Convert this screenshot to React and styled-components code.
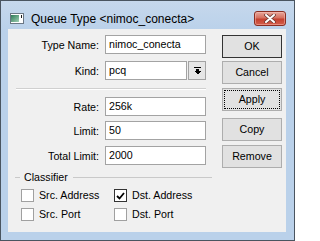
import React from 'react';
import styled, { createGlobalStyle } from 'styled-components';

const Global = createGlobalStyle`
  html, body { margin: 0; padding: 0; background: #ffffff; }
  body { font-family: "Liberation Sans", Arial, sans-serif; }
  * { box-sizing: border-box; }
`;

const Window = styled.div`
  width: 295px;
  height: 241px;
  border: 1px solid #4a5560;
  background: linear-gradient(#c6d8ec, #bad1ea 30px, #bad1ea);
  display: flex;
  flex-direction: column;
  padding: 0 8px 8px 7px;
`;

const TitleBar = styled.div`
  height: 28px;
  display: flex;
  align-items: flex-start;
  flex: none;
`;

const TitleIcon = styled.svg`
  margin-top: 12px;
  margin-left: 2px;
  flex: none;
`;

const TitleText = styled.div`
  margin-top: 11px;
  margin-left: 7px;
  font-size: 12px;
  line-height: 14px;
  color: #000;
  white-space: nowrap;
`;

const CloseButton = styled.div`
  margin-left: auto;
  margin-top: 10px;
  width: 32px;
  height: 15px;
  border: 1px solid #8a2e22;
  border-radius: 3px;
  background: linear-gradient(#e6a89c, #d6705f 45%, #c4412f 55%, #d45f4c);
  box-shadow: inset 0 0 0 1px rgba(255, 200, 190, 0.45);
  display: flex;
  align-items: center;
  justify-content: center;
`;

const Content = styled.div`
  height: 203px;
  background: #f0f0f0;
  display: flex;
  font-size: 10.67px;
  color: #000;
`;

const LeftPane = styled.div`
  width: 214px;
  display: flex;
  flex-direction: column;
`;

const RightPane = styled.div`
  width: 60px;
  display: flex;
  flex-direction: column;
`;

const FieldRow = styled.div`
  display: flex;
  align-items: center;
  height: 19px;
  margin-top: ${p => p.$mt}px;
`;

const Label = styled.div`
  width: 91px;
  text-align: right;
  white-space: nowrap;
  margin-right: 6px;
`;

const Input = styled.div`
  width: ${p => p.$w}px;
  height: 19px;
  background: #fff;
  border: 1px solid #a3a3a3;
  padding-left: 3px;
  line-height: 17px;
  white-space: nowrap;
`;

const DropButton = styled.div`
  width: 18px;
  height: 19px;
  margin-left: 1px;
  background: #e6e6e6;
  border: 1px solid #a3a3a3;
  display: flex;
  align-items: center;
  justify-content: center;
`;

const Separator = styled.div`
  margin-top: 8px;
  margin-left: 8px;
  width: 190px;
  height: 2px;
  border-top: 1px solid #d0d0d0;
  border-bottom: 1px solid #ffffff;
`;

const Legend = styled.div`
  margin-top: 6px;
  height: 13px;
  display: flex;
  align-items: center;
`;

const LegendLine = styled.div`
  height: 1px;
  background: #c9c9c9;
  margin-left: ${p => p.$ml}px;
  width: ${p => p.$w}px;
`;

const LegendText = styled.div`
  margin-left: 4px;
  margin-right: 5px;
  line-height: 13px;
`;

const CheckRow = styled.div`
  display: flex;
  height: 13px;
  padding-left: 13px;
  margin-top: ${p => p.$mt}px;
`;

const CheckItem = styled.div`
  width: 93px;
  display: flex;
  align-items: center;
`;

const Box = styled.div`
  width: 13px;
  height: 13px;
  flex: none;
  border: 1px solid ${p => (p.$checked ? '#333333' : '#a0a0a0')};
  background: #fff;
  display: flex;
  align-items: center;
  justify-content: center;
`;

const CheckLabel = styled.div`
  margin-left: ${p => p.$ml}px;
  line-height: 13px;
  white-space: nowrap;
`;

const Button = styled.div`
  position: relative;
  height: 23px;
  margin-top: ${p => p.$mt}px;
  background: #e1e1e1;
  border: 1px solid ${p => (p.$default ? '#333333' : '#adadad')};
  display: flex;
  align-items: center;
  justify-content: center;
  line-height: 13px;
  &::after {
    content: '';
    display: ${p => (p.$focus ? 'block' : 'none')};
    position: absolute;
    inset: 1px;
    border: 1px dotted #000;
  }
`;

const CheckMark = () => (
  <svg width="9" height="8" viewBox="0 0 9 8">
    <path d="M1 4 L3.5 6.5 L8 1" fill="none" stroke="#000" strokeWidth="1.8" />
  </svg>
);

const Check = ({ label, checked, ml = 4 }) => (
  <CheckItem>
    <Box $checked={checked}>{checked && <CheckMark />}</Box>
    <CheckLabel $ml={ml}>{label}</CheckLabel>
  </CheckItem>
);

export default function App() {
  return (
    <>
      <Global />
      <Window>
        <TitleBar>
          <TitleIcon width="14" height="11" viewBox="0 0 14 11" shapeRendering="crispEdges">
            <defs>
              <linearGradient id="ig" x1="0" x2="1" y1="0" y2="1">
                <stop offset="0" stopColor="#2f7a57" />
                <stop offset="1" stopColor="#9fd0b4" />
              </linearGradient>
            </defs>
            <rect x="0" y="0" width="14" height="11" fill="#6b7784" />
            <rect x="1" y="1" width="12" height="9" fill="#ffffff" />
            <rect x="1" y="2" width="8" height="7" fill="url(#ig)" />
            <rect x="11" y="2" width="1" height="3" fill="#1a1a1a" />
          </TitleIcon>
          <TitleText>Queue Type &lt;nimoc_conecta&gt;</TitleText>
          <CloseButton>
            <svg width="12" height="9" viewBox="0 0 12 9">
              <path d="M2 1 L10 8 M10 1 L2 8" stroke="#6b3a33" strokeWidth="3.6" strokeLinecap="round" />
              <path d="M2 1 L10 8 M10 1 L2 8" stroke="#ffffff" strokeWidth="2" strokeLinecap="round" />
            </svg>
          </CloseButton>
        </TitleBar>
        <Content>
          <LeftPane>
            <FieldRow $mt={6}>
              <Label>Type Name:</Label>
              <Input $w={101}>nimoc_conecta</Input>
            </FieldRow>
            <FieldRow $mt={7}>
              <Label>Kind:</Label>
              <Input $w={82}>pcq</Input>
              <DropButton>
                <svg width="7" height="8" viewBox="0 0 7 8" shapeRendering="crispEdges">
                  <rect x="0" y="0" width="7" height="1" fill="#000" />
                  <rect x="2" y="2" width="3" height="2" fill="#000" />
                  <path d="M0 4 H7 L3.5 7.5 Z" fill="#000" />
                </svg>
              </DropButton>
            </FieldRow>
            <Separator />
            <FieldRow $mt={7}>
              <Label>Rate:</Label>
              <Input $w={101}>256k</Input>
            </FieldRow>
            <FieldRow $mt={5}>
              <Label>Limit:</Label>
              <Input $w={101}>50</Input>
            </FieldRow>
            <FieldRow $mt={6}>
              <Label>Total Limit:</Label>
              <Input $w={101}>2000</Input>
            </FieldRow>
            <Legend>
              <LegendLine $ml={7} $w={5} />
              <LegendText>Classifier</LegendText>
              <LegendLine $ml={0} $w={139} />
            </Legend>
            <CheckRow $mt={5}>
              <Check label="Src. Address" ml={5} />
              <Check label="Dst. Address" checked ml={5} />
            </CheckRow>
            <CheckRow $mt={6}>
              <Check label="Src. Port" ml={5} />
              <Check label="Dst. Port" ml={5} />
            </CheckRow>
          </LeftPane>
          <RightPane>
            <Button $mt={6} $default>OK</Button>
            <Button $mt={3}>Cancel</Button>
            <Button $mt={4} $focus>Apply</Button>
            <Button $mt={7}>Copy</Button>
            <Button $mt={4}>Remove</Button>
          </RightPane>
        </Content>
      </Window>
    </>
  );
}
